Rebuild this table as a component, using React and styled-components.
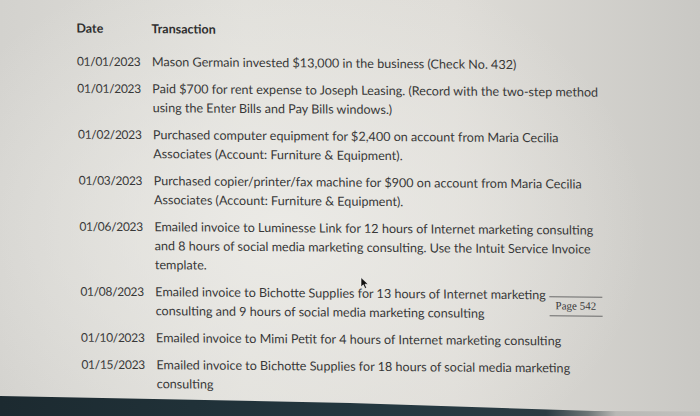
import React from "react";
import styled, { createGlobalStyle } from "styled-components";

const Global = createGlobalStyle`
  html, body { margin: 0; padding: 0; }
  body { width: 700px; height: 416px; overflow: hidden; background: #d6d5d1; }
`;

const Page = styled.div`
  position: relative;
  width: 700px;
  height: 416px;
  overflow: hidden;
  display: flex;
  flex-direction: column;
  font-family: Lato, "Open Sans", sans-serif;
  color: #383838;
  background:
    radial-gradient(ellipse 70% 90% at 40% 55%, rgba(236,235,231,0.9) 0%, rgba(236,235,231,0) 75%),
    linear-gradient(90deg, #d3d2ce 0%, #e0dfda 35%, #dedcd7 65%, #c9c8c4 100%);
`;

const Sheet = styled.div`
  flex: 1;
  padding: 18px 0 0 76px;
  transform: rotate(0.45deg) skewX(1.3deg);
  transform-origin: 0 0;
`;

const Table = styled.div`
  display: grid;
  grid-template-columns: 75px auto;
  row-gap: 8px;
  align-items: start;
`;

const Head = styled.div`
  font-weight: 700;
  font-size: 12.5px;
  line-height: 19px;
  color: #2e2e2e;
  margin-bottom: 6px;
`;

const DateCell = styled.div`
  font-size: 12px;
  line-height: 19px;
  letter-spacing: -0.3px;
`;

const TextCell = styled.div`
  position: relative;
  font-size: 12.6px;
  line-height: 19px;
  white-space: nowrap;
`;

const Line = styled.span`
  display: block;
`;

const PageTag = styled.span`
  position: absolute;
  left: ${(p) => p.$x}px;
  top: 11px;
  padding: 2px 6px 3px;
  border-top: 1px solid #6a6a6a;
  border-bottom: 1px solid #6a6a6a;
  font-family: "Liberation Serif", "DejaVu Serif", serif;
  font-size: 11px;
  line-height: 13px;
  color: #3c3c3c;
`;

const Cursor = styled.svg`
  position: absolute;
  left: 360px;
  top: 277px;
`;

const Band = styled.div`
  height: 20px;
  flex-shrink: 0;
  background: linear-gradient(90deg, #1c2a30 0%, #243840 55%, #2a3b42 78%, #6d7576 84%, #b9b8b5 88%, #c2c1be 100%);
  clip-path: polygon(0 0, 50% 35%, 85% 75%, 100% 78%, 100% 100%, 0 100%);
`;

const rows = [
  { date: "01/01/2023", lines: ["Mason Germain invested $13,000 in the business (Check No. 432)"] },
  {
    date: "01/01/2023",
    lines: [
      "Paid $700 for rent expense to Joseph Leasing. (Record with the two-step method",
      "using the Enter Bills and Pay Bills windows.)",
    ],
  },
  {
    date: "01/02/2023",
    lines: [
      "Purchased computer equipment for $2,400 on account from Maria Cecilia",
      "Associates (Account: Furniture & Equipment).",
    ],
  },
  {
    date: "01/03/2023",
    lines: [
      "Purchased copier/printer/fax machine for $900 on account from Maria Cecilia",
      "Associates (Account: Furniture & Equipment).",
    ],
  },
  {
    date: "01/06/2023",
    lines: [
      "Emailed invoice to Luminesse Link for 12 hours of Internet marketing consulting",
      "and 8 hours of social media marketing consulting. Use the Intuit Service Invoice",
      "template.",
    ],
  },
  {
    date: "01/08/2023",
    lines: [
      "Emailed invoice to Bichotte Supplies for 13 hours of Internet marketing",
      "consulting and 9 hours of social media marketing consulting",
    ],
    tag: "Page 542",
  },
  { date: "01/10/2023", lines: ["Emailed invoice to Mimi Petit for 4 hours of Internet marketing consulting"] },
  {
    date: "01/15/2023",
    lines: [
      "Emailed invoice to Bichotte Supplies for 18 hours of social media marketing",
      "consulting",
    ],
  },
];

export default function App() {
  return (
    <>
      <Global />
      <Page>
        <Sheet>
          <Table>
            <Head>Date</Head>
            <Head>Transaction</Head>
            {rows.map((r, i) => (
              <React.Fragment key={i}>
                <DateCell>{r.date}</DateCell>
                <TextCell>
                  {r.lines.map((l, j) => (
                    <Line key={j}>{l}</Line>
                  ))}
                  {r.tag && <PageTag $x={394}>{r.tag}</PageTag>}
                </TextCell>
              </React.Fragment>
            ))}
          </Table>
        </Sheet>
        <Cursor width="9" height="12" viewBox="0 0 9 12">
          <path d="M1 0.5 L1 10 L3.3 7.8 L5 11.5 L6.6 10.8 L5 7.2 L8.2 7.2 Z" fill="#111" stroke="#fff" strokeWidth="0.6" />
        </Cursor>
        <Band />
      </Page>
    </>
  );
}
